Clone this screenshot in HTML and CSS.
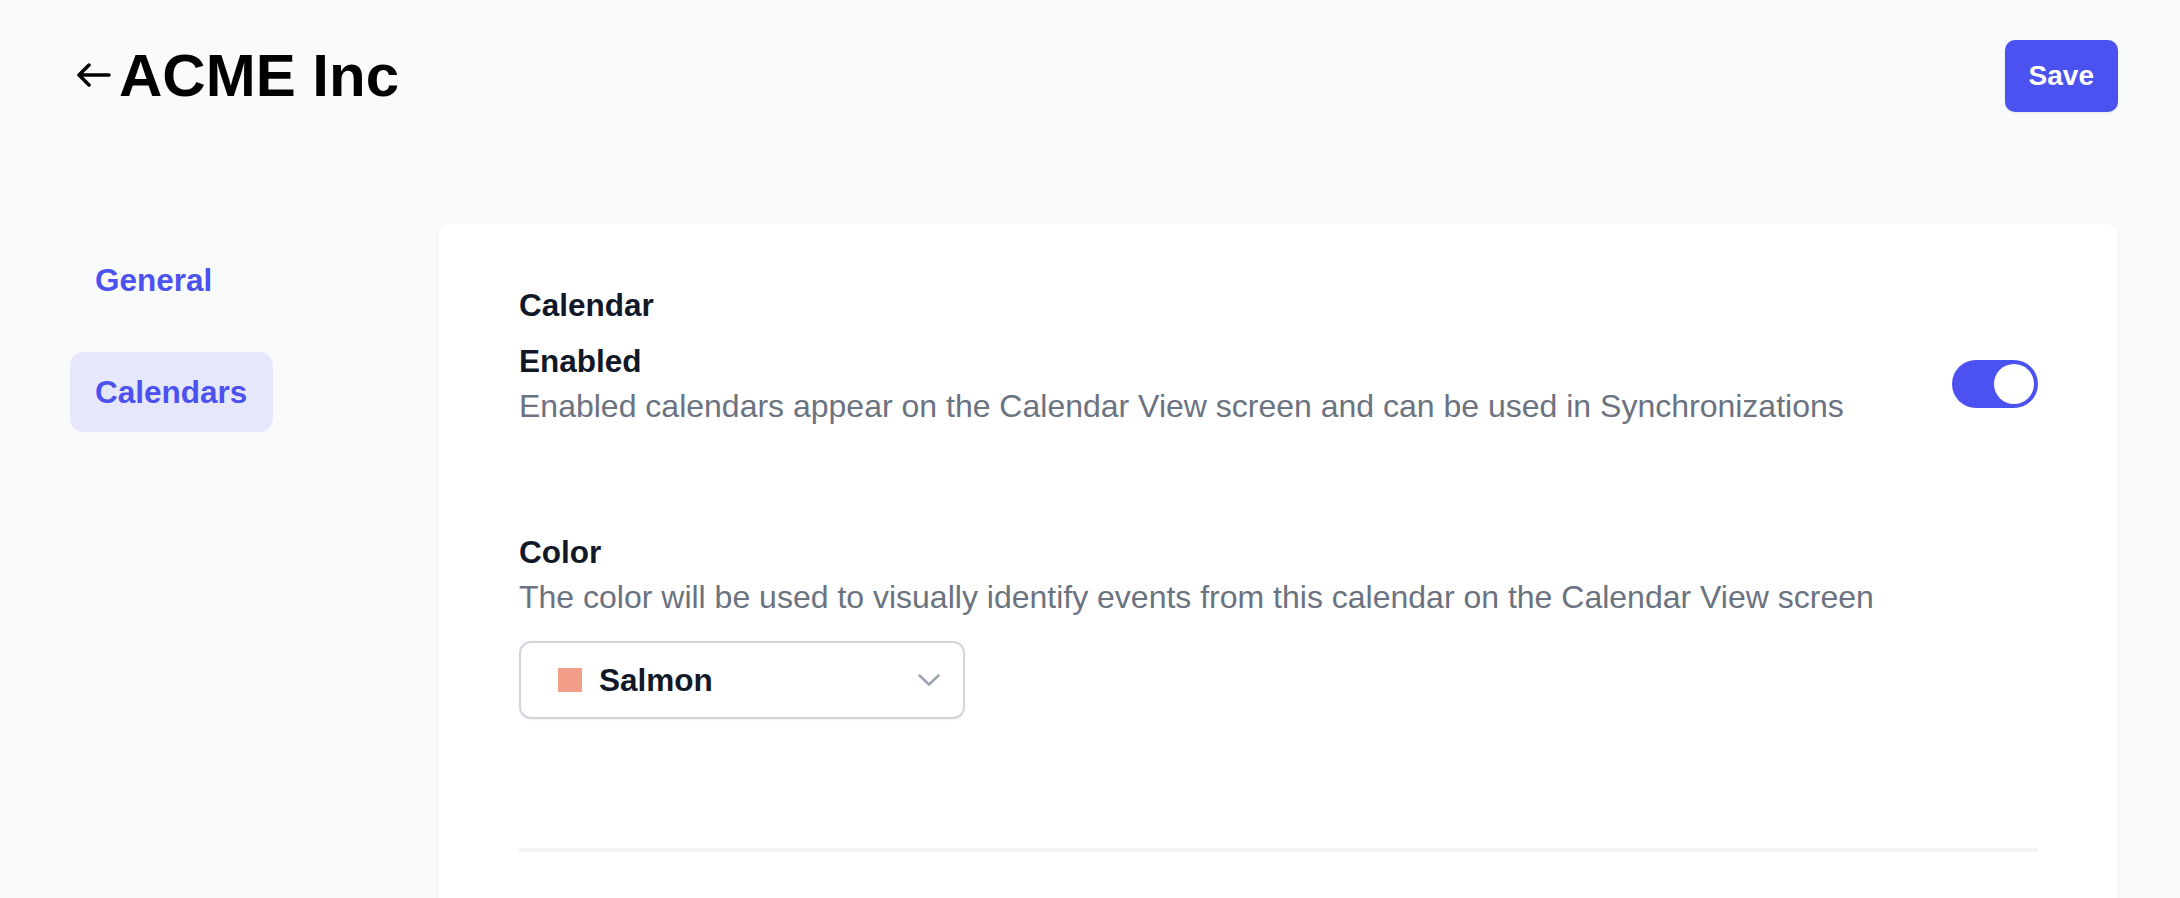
FILE: index.html
```html
<!DOCTYPE html>
<html lang="en">
<head>
<meta charset="utf-8">
<title>ACME Inc – Calendars</title>
<link rel="stylesheet" href="styles.css">
</head>
<body>
  <header class="topbar">
    <h1 class="page-title">
      <a class="back-link" href="#" aria-label="Back">
        <svg class="back-icon" width="34" height="24" viewBox="0 0 34 24" fill="none" stroke="currentColor" stroke-width="3.5" stroke-linecap="round" stroke-linejoin="round"><path d="M32 12H2M12 2L2 12L12 22"/></svg>
      </a>
      <span>ACME Inc</span>
    </h1>
    <button class="btn-save" type="button">Save</button>
  </header>

  <main class="layout">
    <nav class="sidenav">
      <a class="nav-item" href="#">General</a>
      <a class="nav-item nav-item--active" href="#">Calendars</a>
    </nav>

    <section class="card">
      <h2 class="section-title">Calendar</h2>

      <div class="setting-row">
        <div class="setting-text">
          <h3 class="setting-label">Enabled</h3>
          <p class="setting-desc">Enabled calendars appear on the Calendar View screen and can be used in Synchronizations</p>
        </div>
        <span class="toggle" role="switch" aria-checked="true"><span class="toggle-knob"></span></span>
      </div>

      <div class="setting-block">
        <h3 class="setting-label">Color</h3>
        <p class="setting-desc">The color will be used to visually identify events from this calendar on the Calendar View screen</p>
        <div class="select">
          <span class="swatch"></span>
          <span class="select-value">Salmon</span>
          <svg class="chevron" width="22" height="12" viewBox="0 0 22 12" fill="none" stroke="currentColor" stroke-width="2.5" stroke-linecap="round" stroke-linejoin="round"><path d="M1.5 1.5L11 10.5L20.5 1.5"/></svg>
        </div>
      </div>

      <div class="divider"></div>
    </section>
  </main>
</body>
</html>
```

FILE: styles.css
```css
* {
  box-sizing: border-box;
}

html, body {
  margin: 0;
  padding: 0;
}

body {
  background: #f9fafb;
  font-family: "Liberation Sans", Arial, Helvetica, sans-serif;
  color: #111827;
}

.topbar {
  display: flex;
  align-items: center;
  justify-content: space-between;
  padding: 40px 62px 0 77px;
  height: 112px;
}

.page-title {
  display: flex;
  align-items: center;
  margin: 0;
  font-size: 60px;
  line-height: 72px;
  font-weight: 700;
  color: #000;
}

.back-link {
  display: flex;
  color: #000;
  margin-right: 8px;
  margin-top: -2px;
}

.back-icon {
  display: block;
}

.btn-save {
  height: 72px;
  padding: 0 24px;
  border: 0;
  border-radius: 10px;
  background: #4b52ef;
  color: #fff;
  font-family: inherit;
  font-size: 28px;
  font-weight: 700;
  box-shadow: 0 1px 3px rgba(0, 0, 0, 0.08);
  cursor: pointer;
}

.layout {
  display: grid;
  grid-template-columns: 203px 1fr;
  column-gap: 165px;
  padding: 0 62px 0 70px;
  margin-top: 112px;
}

.sidenav {
  display: flex;
  flex-direction: column;
  gap: 32px;
  padding-top: 16px;
}

.nav-item {
  display: flex;
  align-items: center;
  height: 80px;
  padding: 0 25px;
  border-radius: 14px;
  color: #4b52ef;
  font-size: 31.5px;
  font-weight: 700;
  text-decoration: none;
}

.nav-item--active {
  background: #e7e7fb;
}

.card {
  background: #fff;
  border-radius: 12px;
  box-shadow: 0 1px 3px rgba(0, 0, 0, 0.08), 0 1px 2px rgba(0, 0, 0, 0.04);
  padding: 59px 80px 160px 81px;
}

.section-title {
  margin: 0 0 11px;
  font-size: 31.5px;
  line-height: 45px;
  font-weight: 700;
  color: #111827;
}

.setting-row {
  display: flex;
  align-items: center;
  justify-content: space-between;
}

.setting-label {
  margin: 0;
  font-size: 31.5px;
  line-height: 45px;
  font-weight: 700;
  color: #111827;
}

.setting-desc {
  margin: 0;
  font-size: 32px;
  line-height: 45px;
  color: #6b7280;
}

.toggle {
  display: flex;
  justify-content: flex-end;
  align-items: center;
  width: 86px;
  height: 48px;
  padding: 4px;
  border-radius: 24px;
  background: #4b52ef;
  flex-shrink: 0;
}

.toggle-knob {
  width: 40px;
  height: 40px;
  border-radius: 50%;
  background: #fff;
}

.setting-block {
  margin-top: 101px;
}

.select {
  display: flex;
  align-items: center;
  width: 446px;
  height: 78px;
  margin-top: 21px;
  padding: 0 23px 0 37px;
  border: 2px solid #d1d5db;
  border-radius: 12px;
  background: #fff;
  box-shadow: 0 1px 2px rgba(0, 0, 0, 0.05);
}

.swatch {
  width: 24px;
  height: 24px;
  background: #f19d88;
  flex-shrink: 0;
}

.select-value {
  margin-left: 17px;
  flex: 1;
  font-size: 31.5px;
  font-weight: 700;
  color: #111827;
}

.chevron {
  color: #9ca3af;
  display: block;
}

.divider {
  height: 4px;
  margin-top: 129px;
  background: #f3f4f6;
}
```
